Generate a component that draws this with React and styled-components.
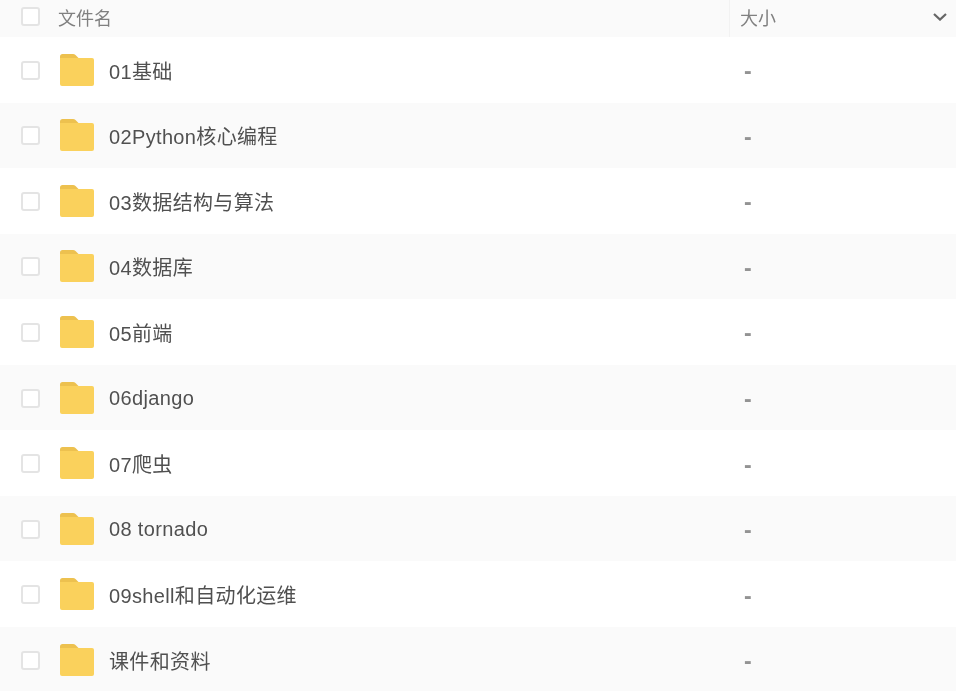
import styled, { createGlobalStyle } from "styled-components";

const files = [
  "01基础",
  "02Python核心编程",
  "03数据结构与算法",
  "04数据库",
  "05前端",
  "06django",
  "07爬虫",
  "08 tornado",
  "09shell和自动化运维",
  "课件和资料",
];

const GlobalStyle = createGlobalStyle`
  html, body {
    margin: 0;
    padding: 0;
    height: 100%;
    overflow: hidden;
    background: #ffffff;
  }
`;

export default function App() {
  return (
    <>
      <GlobalStyle />
      <Page>
        <Header>
          <NameHead>
            <Checkbox />
            <HeadLabel>文件名</HeadLabel>
          </NameHead>
          <SizeHead>
            <HeadLabel>大小</HeadLabel>
            <Chevron viewBox="0 0 14 8">
              <path d="M1 1 L7 6.6 L13 1" />
            </Chevron>
          </SizeHead>
        </Header>
        {files.map((name, i) => (
          <Row key={name} $shaded={i % 2 === 1}>
            <NameCell>
              <RowCheckbox />
              <FolderIcon />
              <FileName>{name}</FileName>
            </NameCell>
            <SizeCell>-</SizeCell>
          </Row>
        ))}
      </Page>
    </>
  );
}

function FolderIcon() {
  return (
    <Folder viewBox="0 0 34 32">
      <path d="M0 2.5 Q0 0 2.5 0 H13 Q14.5 0 15.5 1 L18.5 4 H0 Z" fill="#edc14f" />
      <path
        d="M0 4 H32 Q34 4 34 6 V30 Q34 32 32 32 H2 Q0 32 0 30 Z"
        fill="#fad15c"
      />
    </Folder>
  );
}

const Page = styled.div`
  width: 956px;
  height: 691px;
  overflow: hidden;
  font-family: "Liberation Sans", "Noto Sans CJK SC", sans-serif;
  filter: blur(0.6px);
`;

const Header = styled.div`
  display: flex;
  height: 37px;
  background: #fafafa;
`;

const NameHead = styled.div`
  width: 729px;
  display: flex;
  align-items: center;
  gap: 18px;
  padding-left: 21px;
  padding-bottom: 4px;
  box-sizing: border-box;
`;

const SizeHead = styled.div`
  flex: 1;
  display: flex;
  align-items: center;
  justify-content: space-between;
  padding: 0 9px 4px 10px;
  border-left: 1px solid #f2f2f2;
`;

const HeadLabel = styled.span`
  font-size: 18px;
  color: #808080;
`;

const Chevron = styled.svg`
  width: 14px;
  height: 8px;
  fill: none;
  stroke: #666666;
  stroke-width: 2.2;
`;

const Row = styled.div`
  display: flex;
  align-items: center;
  height: 65.55px;
  background: ${(props) => (props.$shaded ? "#fafafa" : "#ffffff")};
`;

const NameCell = styled.div`
  width: 729px;
  display: flex;
  align-items: center;
  padding-left: 21px;
  box-sizing: border-box;
`;

const Checkbox = styled.span`
  width: 19px;
  height: 19px;
  box-sizing: border-box;
  flex: none;
  border: 2px solid #e4e4e4;
  border-radius: 3px;
  background: #ffffff;
`;

const RowCheckbox = styled(Checkbox)`
  margin-top: 1px;
`;

const Folder = styled.svg`
  width: 34px;
  height: 32px;
  flex: none;
  margin-left: 20px;
`;

const FileName = styled.span`
  margin: 1px 0 0 15px;
  font-size: 20px;
  letter-spacing: 0.35px;
  color: #505050;
`;

const SizeCell = styled.div`
  padding: 4px 0 0 15px;
  font-size: 23px;
  font-weight: 700;
  color: #939393;
`;
